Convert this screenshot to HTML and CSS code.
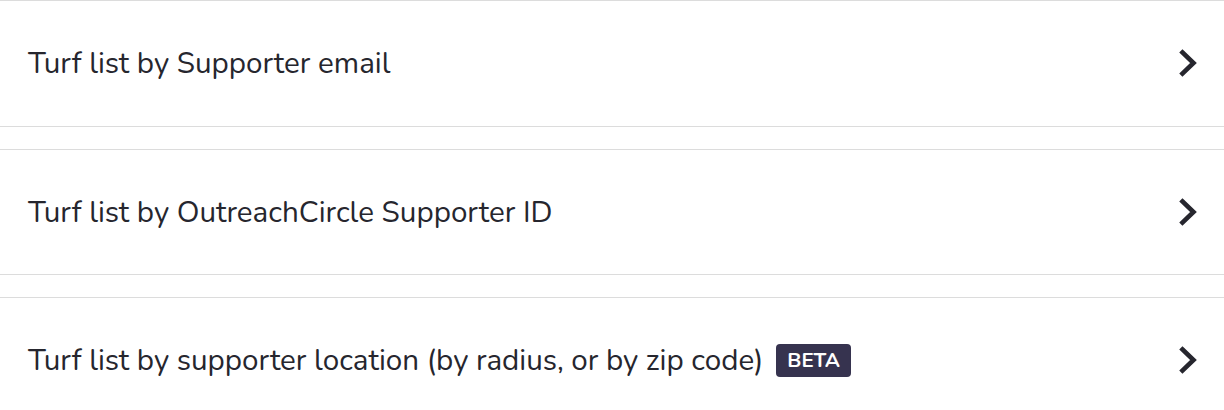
FILE: index.html
```html
<!DOCTYPE html>
<html lang="en">
<head>
<meta charset="utf-8">
<title>Turf lists</title>
<link rel="stylesheet" href="styles.css">
</head>
<body>
<div class="list">
  <a class="row" href="#">
    <span class="label">Turf list by Supporter email</span>
    <svg class="chev" width="22" height="30" viewBox="0 0 22 30"><polyline points="4.5,4.5 15.5,15 4.5,25.5" fill="none" stroke="#26262e" stroke-width="4.6" stroke-linecap="square" stroke-linejoin="miter"/></svg>
  </a>
  <a class="row" href="#">
    <span class="label">Turf list by OutreachCircle Supporter ID</span>
    <svg class="chev" width="22" height="30" viewBox="0 0 22 30"><polyline points="4.5,4.5 15.5,15 4.5,25.5" fill="none" stroke="#26262e" stroke-width="4.6" stroke-linecap="square" stroke-linejoin="miter"/></svg>
  </a>
  <a class="row" href="#">
    <span class="label">Turf list by supporter location (by radius, or by zip code) <span class="badge">BETA</span></span>
    <svg class="chev" width="22" height="30" viewBox="0 0 22 30"><polyline points="4.5,4.5 15.5,15 4.5,25.5" fill="none" stroke="#26262e" stroke-width="4.6" stroke-linecap="square" stroke-linejoin="miter"/></svg>
  </a>
</div>
</body>
</html>
```
FILE: styles.css
```css
html, body {
  margin: 0;
  padding: 0;
  background: #ffffff;
}
body {
  font-family: "Nunito", "Lato", "Open Sans", sans-serif;
  color: #26262e;
}
.list {
  display: flex;
  flex-direction: column;
  gap: 22px;
}
.row {
  box-sizing: border-box;
  display: flex;
  align-items: center;
  justify-content: space-between;
  height: 126.5px;
  padding: 0 24px 0 28px;
  border-top: 1px solid #dcdcdc;
  border-bottom: 1px solid #dcdcdc;
  text-decoration: none;
  color: inherit;
}
.label {
  font-size: 29.6px;
  display: flex;
  align-items: center;
  gap: 13px;
}
.badge {
  display: inline-block;
  background: #36334f;
  color: #ffffff;
  font-weight: 700;
  font-size: 20.5px;
  line-height: 33px;
  padding: 0 11px;
  border-radius: 4px;
}
.chev {
  display: block;
}
```
